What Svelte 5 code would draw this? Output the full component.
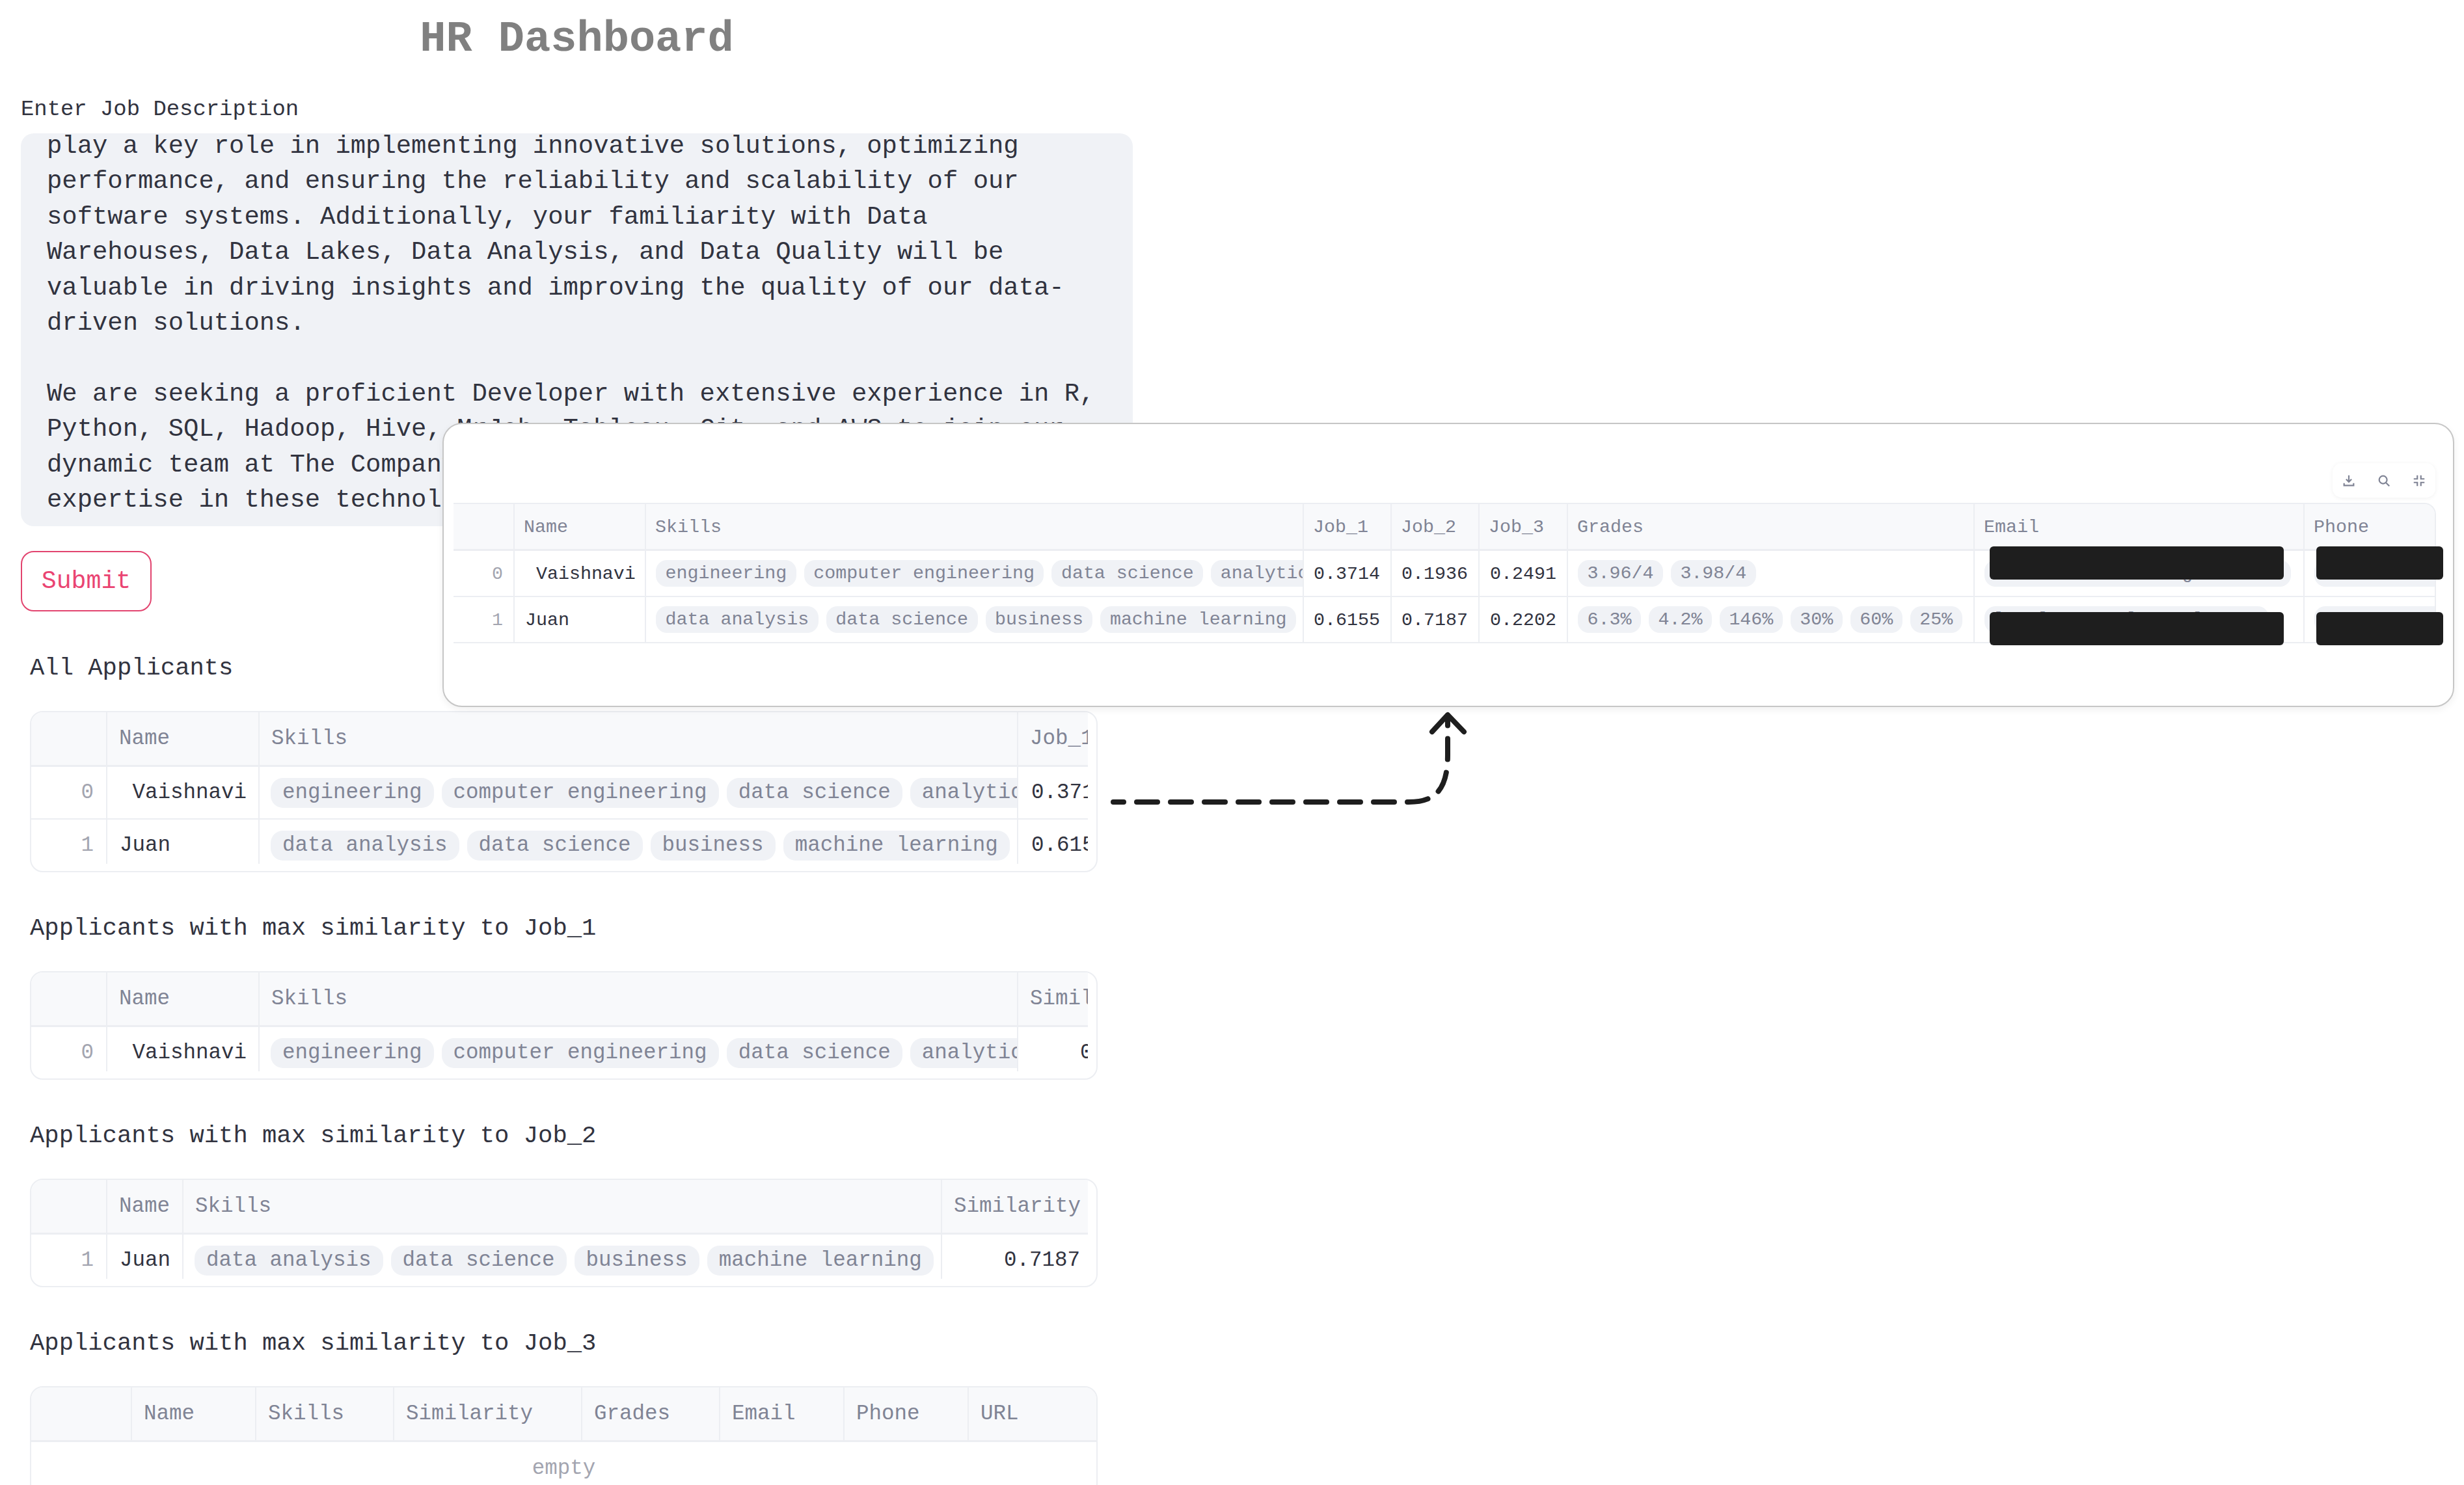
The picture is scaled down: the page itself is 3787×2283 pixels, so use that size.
<script>
  const skillsA = ['engineering', 'computer engineering', 'data science', 'analytics', 'statistics'];
  const skillsB = ['data analysis', 'data science', 'business', 'machine learning'];

  // email and phone are blacked out in the source, so the pills hold filler
  const vaishnavi = {
    idx: '0',
    Name: ' Vaishnavi',
    Skills: skillsA,
    Job_1: '0.3714',
    Job_2: '0.1936',
    Job_3: '0.2491',
    Similarity: '0.3714',
    Grades: ['3.96/4', '3.98/4'],
    Email: ['xxxxxxxxxxxxxxxxxgxxxxxxxx'],
    Phone: ['xxxxxxxxxxxxxxxx']
  };
  const juan = {
    idx: '1',
    Name: 'Juan',
    Skills: skillsB,
    Job_1: '0.6155',
    Job_2: '0.7187',
    Job_3: '0.2202',
    Similarity: '0.7187',
    Grades: ['6.3%', '4.2%', '146%', '30%', '60%', '25%'],
    Email: ['lxxxlxxxxxxxlxxxxxlxxxxx'],
    Phone: ['xxxxxxxxxxxxxxxx']
  };

  const numeric = ['Job_1', 'Job_2', 'Job_3', 'Similarity'];

  function cols(keys, widths) {
    return keys.map((key, i) => ({ key, w: widths[i] }));
  }
  function tracks(columns) {
    return columns.map((c) => c.w + 'px').join(' ');
  }

  const allCols = cols(['idx', 'Name', 'Skills', 'Job_1'], [117, 234, 1166, 158]);
  const job1Cols = cols(['idx', 'Name', 'Skills', 'Similarity'], [117, 234, 1166, 233]);
  const job2Cols = cols(['idx', 'Name', 'Skills', 'Similarity'], [117, 117, 1166, 233]);
  const job3Cols = cols(
    ['idx', 'Name', 'Skills', 'Similarity', 'Grades', 'Email', 'Phone', 'URL'],
    [155, 191, 212, 289, 212, 191, 191, 198]
  );
  const popupCols = cols(
    ['idx', 'Name', 'Skills', 'Job_1', 'Job_2', 'Job_3', 'Grades', 'Email', 'Phone'],
    [94, 202, 1011, 135, 135, 136, 625, 507, 240]
  );

  const description = [
    'play a key role in implementing innovative solutions, optimizing',
    'performance, and ensuring the reliability and scalability of our',
    'software systems. Additionally, your familiarity with Data',
    'Warehouses, Data Lakes, Data Analysis, and Data Quality will be',
    'valuable in driving insights and improving the quality of our data-',
    'driven solutions.',
    '',
    'We are seeking a proficient Developer with extensive experience in R,',
    'Python, SQL, Hadoop, Hive, MrJob, Tableau, Git, and AWS to join our',
    'dynamic team at The Company. Your',
    'expertise in these technologies'
  ].join('\n');
</script>

{#snippet grid(columns, rows)}
  <div class="head line" style:grid-template-columns={tracks(columns)}>
    {#each columns as c}
      <div class="cell">{c.key === 'idx' ? '' : c.key}</div>
    {/each}
  </div>
  {#each rows as row}
    <div class="line" style:grid-template-columns={tracks(columns)}>
      {#each columns as c}
        {#if c.key === 'idx'}
          <div class="cell idx">{row.idx}</div>
        {:else if Array.isArray(row[c.key])}
          <div class="cell pills">
            {#each row[c.key] as pill}
              <span class="pill">{pill}</span>
            {/each}
          </div>
        {:else}
          <div class="cell" class:num={numeric.includes(c.key)}>{row[c.key]}</div>
        {/if}
      {/each}
    </div>
  {/each}
{/snippet}

<div class="page">
  <div class="main">
    <h1>HR Dashboard</h1>
    <div class="label">Enter Job Description</div>
    <div class="textarea"><div class="scrolled">{description}</div></div>
    <button class="submit">Submit</button>

    <h3 class="first">All Applicants</h3>
    <div class="frame">
      <div class="canvas">{@render grid(allCols, [vaishnavi, juan])}</div>
    </div>

    <h3>Applicants with max similarity to Job_1</h3>
    <div class="frame">
      <div class="canvas">{@render grid(job1Cols, [vaishnavi])}</div>
    </div>

    <h3>Applicants with max similarity to Job_2</h3>
    <div class="frame">
      <div class="canvas">{@render grid(job2Cols, [juan])}</div>
    </div>

    <h3>Applicants with max similarity to Job_3</h3>
    <div class="frame empty-frame">
      {@render grid(job3Cols, [])}
      <div class="empty">empty</div>
    </div>
  </div>

  <div class="popup">
    <div class="toolbar">
      <svg viewBox="0 0 24 24" class="icon">
        <path d="M12 3v11M7.5 9.5l4.5 4.5 4.5-4.5M4 16v4h16v-4" />
      </svg>
      <svg viewBox="0 0 24 24" class="icon">
        <circle cx="10.5" cy="10.5" r="6.5" />
        <path d="M15.5 15.5L21 21" />
      </svg>
      <svg viewBox="0 0 24 24" class="icon">
        <path d="M9 3v6H3M15 3v6h6M9 21v-6H3M15 21v-6h6" />
      </svg>
    </div>
    <div class="small">
      {@render grid(popupCols, [vaishnavi, juan])}
    </div>
    <div class="redact email r1"></div>
    <div class="redact phone r1"></div>
    <div class="redact email r2"></div>
    <div class="redact phone r2"></div>
  </div>

  <svg class="arrow" viewBox="0 0 3787 2283">
    <path class="dash" d="M1711 1233H2165C2207 1233 2225 1213 2225 1160V1100" />
    <path class="head-line" d="M2201 1125L2225 1099L2250 1125" />
  </svg>
</div>

<style>
  :global(body) {
    margin: 0;
    overflow: hidden;
    background: #fff;
  }
  .page {
    position: relative;
    width: 3787px;
    height: 2283px;
    overflow: hidden;
    font-family: "Liberation Mono", monospace;
    color: #31333f;
  }
  .main {
    width: 1709px;
    margin-left: 32px;
  }
  h1 {
    margin: 0;
    height: 116px;
    box-sizing: border-box;
    padding-top: 2px;
    line-height: 116px;
    font-size: 67px;
    font-weight: 700;
    text-align: center;
    color: #808080;
  }
  .label {
    margin: 30px 0 15px;
    font-size: 33.9px;
    line-height: 44px;
  }
  .textarea {
    height: 604px;
    border-radius: 20px;
    background: #f0f2f6;
    overflow: hidden;
    padding: 0 40px;
  }
  .scrolled {
    margin-top: -7px;
    font-size: 38.9px;
    line-height: 54.4px;
    white-space: pre;
  }
  .submit {
    display: block;
    width: 201px;
    height: 93px;
    margin-top: 38px;
    padding: 0;
    border: 2px solid #e2446f;
    border-radius: 20px;
    background: #fff;
    color: #ea4472;
    font-family: inherit;
    font-size: 38.2px;
  }
  h3 {
    margin: 59px 0 39px 14px;
    font-size: 37.2px;
    font-weight: 400;
    line-height: 54px;
  }
  h3.first {
    margin-top: 60px;
  }
  .frame {
    width: 1641px;
    margin-left: 14px;
    box-sizing: border-box;
    border: 2px solid #eceef2;
    border-radius: 20px;
    padding: 0 13px 11px 0;
    overflow: hidden;
    font-size: 32.5px;
    --head: 84px;
    --row: 81px;
    --pad: 18px;
    --pad-cell: 19px;
    --pad-head: 18px;
    --pad-pills: 17px;
    --pill: 46px;
    --pill-radius: 19px;
  }
  .empty-frame {
    padding: 0;
  }
  .canvas {
    overflow: hidden;
  }
  .canvas .line:last-child {
    margin-bottom: -13px;
  }
  .line {
    display: grid;
    height: var(--row);
    box-sizing: border-box;
    border-bottom: 2px solid #eceef2;
  }
  .head {
    height: var(--head);
    background: #f8f9fb;
    color: #808495;
    border-bottom-width: 3px;
  }
  .cell {
    display: flex;
    align-items: center;
    box-sizing: border-box;
    min-width: 0;
    padding: 0 var(--pad-cell);
    border-right: 2px solid #eceef2;
    overflow: hidden;
    white-space: pre;
  }
  .head .cell {
    padding: 0 var(--pad-head);
  }
  .idx {
    justify-content: flex-end;
    color: #a3a5b0;
  }
  .num {
    justify-content: flex-end;
  }
  .pills {
    gap: 12px;
    padding: 0 0 0 var(--pad-pills);
  }
  .pill {
    flex: none;
    height: var(--pill);
    line-height: var(--pill);
    padding: 0 var(--pad);
    border-radius: var(--pill-radius);
    background: #f0f2f6;
    color: #808495;
  }
  .empty {
    height: 82px;
    line-height: 82px;
    text-align: center;
    color: #a3a5b0;
    font-size: 32.5px;
  }
  .popup {
    position: absolute;
    left: 680px;
    top: 650px;
    width: 3092px;
    height: 437px;
    box-sizing: border-box;
    border: 2px solid #c6c6c6;
    border-radius: 30px;
    background: #fff;
    box-shadow: 0 4px 12px rgba(0, 0, 0, 0.06);
  }
  .small {
    width: 3047px;
    margin: 121px 0 0 15px;
    box-sizing: border-box;
    border-top: 2px solid #eceef2;
    border-right: 2px solid #eceef2;
    border-top-right-radius: 18px;
    overflow: hidden;
    font-size: 28.3px;
    --head: 72px;
    --row: 71px;
    --pad: 14.5px;
    --pad-cell: 16px;
    --pad-head: 14px;
    --pad-pills: 15px;
    --pill: 41px;
    --pill-radius: 17px;
  }
  .toolbar {
    position: absolute;
    left: 2903px;
    top: 60px;
    width: 158px;
    height: 53px;
    box-sizing: border-box;
    padding: 0 14px;
    display: flex;
    align-items: center;
    justify-content: space-between;
    border-radius: 14px;
    background: #fff;
    box-shadow: 0 1px 6px rgba(0, 0, 0, 0.06);
  }
  .icon {
    width: 22px;
    height: 22px;
    fill: none;
    stroke: #808495;
    stroke-width: 2.4;
  }
  .redact {
    position: absolute;
    height: 51px;
    background: #1e1e1e;
    border-radius: 6px;
  }
  .email {
    left: 2376px;
    width: 452px;
  }
  .phone {
    left: 2878px;
    width: 195px;
  }
  .r1 {
    top: 188px;
  }
  .r2 {
    top: 289px;
  }
  .arrow {
    position: absolute;
    left: 0;
    top: 0;
    width: 3787px;
    height: 2283px;
    pointer-events: none;
    fill: none;
    stroke: #1e1e1e;
    stroke-width: 8;
    stroke-linecap: round;
    stroke-linejoin: round;
  }
  .dash {
    stroke-dasharray: 32 20;
    stroke-dashoffset: 16;
  }
</style>
